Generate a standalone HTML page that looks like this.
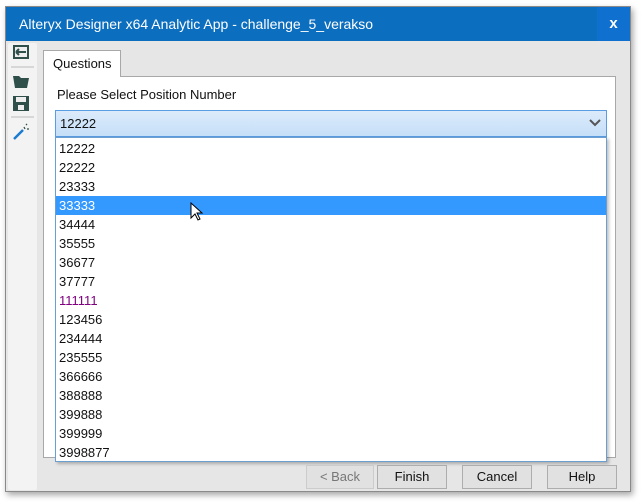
<!DOCTYPE html>
<html><head><style>
*{margin:0;padding:0;box-sizing:border-box}
body{width:641px;height:502px;background:#fff;font-family:"Segoe UI","Liberation Sans",sans-serif;font-size:13px;position:relative;overflow:hidden}
.abs{position:absolute}
.win{left:5px;top:6px;width:626px;height:486px;background:#e6e6e6;border:1px solid #8a8a8a;box-shadow:2px 3px 6px rgba(0,0,0,.35)}
.title{left:6px;top:7px;width:624px;height:34px;background:#0c6ebf;color:#fff;font-size:14px;line-height:34px;padding-left:13px}
.close{left:597px;top:7px;width:33px;height:34px;background:#0f70cf;color:#fff;font-weight:bold;font-size:15px;text-align:center;line-height:33px}
.tb{left:8px;top:43px;width:29px;height:447px;background:#f3f3f3;border-radius:2px}
.panel{left:43px;top:76px;width:573px;height:382px;background:#fff;border:1px solid #a8a8a8}
.tab{left:43px;top:50px;width:78px;height:27px;background:#fff;border:1px solid #a8a8a8;border-bottom:none;line-height:25px;padding-left:9px;font-size:13px;color:#111}
.combo{left:55px;top:110px;width:552px;height:27px;border:1px solid #5a9de0;background:linear-gradient(#dcebfb,#c5dff8);line-height:25px;padding-left:4px;color:#111}
.list{left:55px;top:137px;width:552px;height:325px;background:#fff;border:1px solid #6a9fd0;box-shadow:2px 2px 3px rgba(0,0,0,.25)}
.item{position:absolute;left:0;width:550px;height:19px;line-height:19px;padding-left:3px;color:#111}
.sel{background:#3399ff;color:#fff}
.btn{position:absolute;top:465px;height:24px;border:1px solid #adadad;background:#e1e1e1;text-align:center;line-height:22px;color:#111}
</style></head><body>
<div class="abs win"></div>
<div class="abs title">Alteryx Designer x64 Analytic App - challenge_5_verakso</div>
<div class="abs close">x</div>
<div class="abs tb"></div>
<svg class="abs" style="left:8px;top:43px" width="29" height="100">
<rect x="5" y="2" width="16" height="14" fill="#2f4f4a"/><rect x="7" y="4" width="12" height="10" fill="#eee"/><path d="M8 9h10M8 9l3-3M8 9l3 3" stroke="#2f4f4a" stroke-width="2" fill="none"/>
<line x1="3" y1="24" x2="26" y2="24" stroke="#bbb"/>
<path d="M5 33h6l2 2h8l-2 10h-12z" fill="#2f4f4a"/>
<rect x="5" y="53" width="16" height="15" fill="#2f4f4a"/><rect x="8" y="54" width="10" height="5" fill="#eee"/><rect x="10" y="62" width="6" height="5" fill="#eee"/>
<line x1="3" y1="74" x2="26" y2="74" stroke="#bbb"/>
<path d="M6 96l9-9" stroke="#1a7bd0" stroke-width="2.5"/><path d="M16 84l1 2M19 86l2 0M18 82l1-1" stroke="#2f4f4a" stroke-width="1.3"/>
</svg>
<div class="abs panel"></div>
<div class="abs tab">Questions</div>
<div class="abs" style="left:57px;top:87px;color:#111">Please Select Position Number</div>
<div class="abs combo">12222<svg style="position:absolute;right:5px;top:8px" width="12" height="8"><path d="M1 1l5 5 5-5" stroke="#555" stroke-width="2" fill="none"/></svg></div>
<div class="abs list">
<div class="item" style="top:1px">12222</div>
<div class="item" style="top:20px">22222</div>
<div class="item" style="top:39px">23333</div>
<div class="item sel" style="top:58px">33333</div>
<div class="item" style="top:77px">34444</div>
<div class="item" style="top:96px">35555</div>
<div class="item" style="top:115px">36677</div>
<div class="item" style="top:134px">37777</div>
<div class="item" style="top:153px;color:#800080">111111</div>
<div class="item" style="top:172px">123456</div>
<div class="item" style="top:191px">234444</div>
<div class="item" style="top:210px">235555</div>
<div class="item" style="top:229px">366666</div>
<div class="item" style="top:248px">388888</div>
<div class="item" style="top:267px">399888</div>
<div class="item" style="top:286px">399999</div>
<div class="item" style="top:305px">3998877</div>
</div>
<svg class="abs" style="left:190px;top:202px" width="14" height="20"><path d="M1 1v15l4-4 3 6 2-1-3-6h5z" fill="#fff" stroke="#000"/></svg>
<div class="btn" style="left:306px;width:68px;color:#777;border-color:#ccc">&lt; Back</div>
<div class="btn" style="left:377px;width:70px">Finish</div>
<div class="btn" style="left:462px;width:70px">Cancel</div>
<div class="btn" style="left:547px;width:70px">Help</div>
</body></html>
